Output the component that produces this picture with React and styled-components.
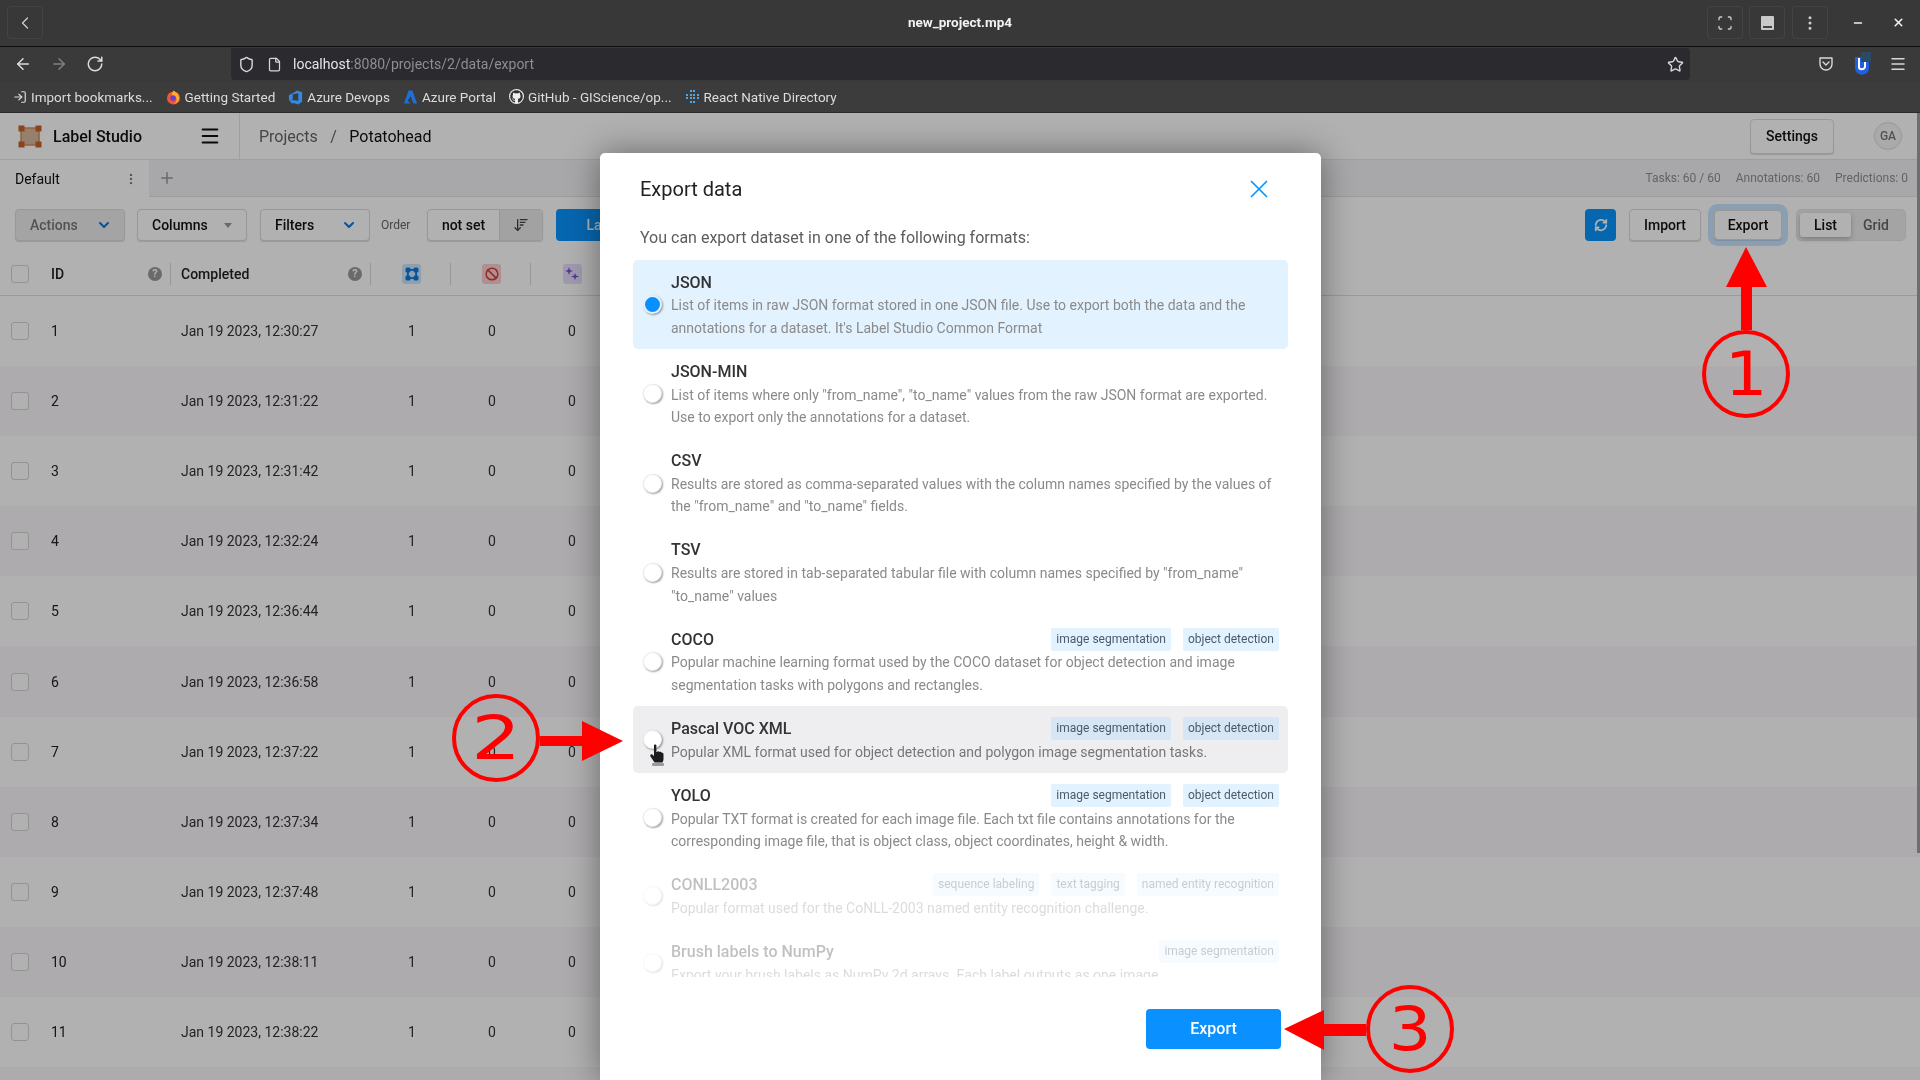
import React from "react";
import styled, { createGlobalStyle } from "styled-components";
import {
  ArrowLeft,
  ArrowRight,
  ArrowDownWideNarrow,
  Ban,
  ChevronDown,
  ChevronLeft,
  File,
  LogIn,
  Menu,
  Minus,
  MoreVertical,
  Plus,
  RefreshCw,
  RotateCw,
  Scan,
  Shield,
  Star,
  X,
} from "lucide-react";
import { FaGithub } from "react-icons/fa";

const GlobalStyle = createGlobalStyle`
  html, body { margin: 0; padding: 0; background: #3a3a3a; }
  * { box-sizing: border-box; }
  body { font-family: Roboto, "Liberation Sans", sans-serif; }
`;

const rows = [
  ["1", "12:30:27"],
  ["2", "12:31:22"],
  ["3", "12:31:42"],
  ["4", "12:32:24"],
  ["5", "12:36:44"],
  ["6", "12:36:58"],
  ["7", "12:37:22"],
  ["8", "12:37:34"],
  ["9", "12:37:48"],
  ["10", "12:38:11"],
  ["11", "12:38:22"],
  ["12", "12:38:40"],
];

const SEG = "image segmentation";
const DET = "object detection";

const formats = [
  {
    name: "JSON",
    selected: true,
    lines: [
      "List of items in raw JSON format stored in one JSON file. Use to export both the data and the",
      "annotations for a dataset. It's Label Studio Common Format",
    ],
  },
  {
    name: "JSON-MIN",
    lines: [
      'List of items where only "from_name", "to_name" values from the raw JSON format are exported.',
      "Use to export only the annotations for a dataset.",
    ],
  },
  {
    name: "CSV",
    lines: [
      "Results are stored as comma-separated values with the column names specified by the values of",
      'the "from_name" and "to_name" fields.',
    ],
  },
  {
    name: "TSV",
    lines: [
      'Results are stored in tab-separated tabular file with column names specified by "from_name"',
      '"to_name" values',
    ],
  },
  {
    name: "COCO",
    tags: [SEG, DET],
    lines: [
      "Popular machine learning format used by the COCO dataset for object detection and image",
      "segmentation tasks with polygons and rectangles.",
    ],
  },
  {
    name: "Pascal VOC XML",
    hover: true,
    tags: [SEG, DET],
    lines: ["Popular XML format used for object detection and polygon image segmentation tasks."],
  },
  {
    name: "YOLO",
    tags: [SEG, DET],
    lines: [
      "Popular TXT format is created for each image file. Each txt file contains annotations for the",
      "corresponding image file, that is object class, object coordinates, height & width.",
    ],
  },
  {
    name: "CONLL2003",
    disabled: true,
    tags: ["sequence labeling", "text tagging", "named entity recognition"],
    lines: ["Popular format used for the CoNLL-2003 named entity recognition challenge."],
  },
  {
    name: "Brush labels to NumPy",
    disabled: true,
    tags: [SEG],
    lines: ["Export your brush labels as NumPy 2d arrays. Each label outputs as one image."],
  },
];

const LogoMark = () => (
  <svg width="24" height="23" viewBox="0 0 24 23">
    <rect x="3" y="3" width="18" height="17" fill="#d9b79c" stroke="#cf8f5e" strokeWidth="1.5" />
    <rect x="0.5" y="0.5" width="6" height="6" fill="#c4632a" />
    <rect x="17.5" y="0.5" width="6" height="6" fill="#c4632a" />
    <rect x="0.5" y="16.5" width="6" height="6" fill="#c4632a" />
    <rect x="17.5" y="16.5" width="6" height="6" fill="#c4632a" />
  </svg>
);

const FirefoxIcon = () => (
  <svg width="15" height="16" viewBox="0 0 16 16">
    <circle cx="8" cy="9" r="7" fill="#f0562f" />
    <path d="M8 1c3 2 6 4 6 8 0 3-2 6-6 6 3-1 4-3 3-6-1-2-4-3-5-2 0-2 1-4 2-6z" fill="#ffb02e" />
    <circle cx="7.5" cy="9" r="3" fill="#6b3fc4" />
  </svg>
);

const DevopsIcon = () => (
  <svg width="15" height="16" viewBox="0 0 16 16">
    <path d="M15 3v10l-4 3-6-2v2L1 11l10 1V4L5 5v6L1 11V6l9-5z" fill="#2f8be6" />
  </svg>
);

const PortalIcon = () => (
  <svg width="15" height="16" viewBox="0 0 16 16">
    <path d="M6 1h4l5 14h-4L8 7l-3 5 3 3H1z" fill="#1f6fd6" />
  </svg>
);

const DirectoryIcon = () => (
  <svg width="15" height="15" viewBox="0 0 15 15" fill="#4aa8e8">
    <rect x="5" y="1" width="2" height="2" />
    <rect x="8" y="1" width="2" height="2" />
    <rect x="1" y="5" width="2" height="2" />
    <rect x="5" y="5" width="2" height="2" />
    <rect x="8" y="5" width="2" height="2" />
    <rect x="12" y="5" width="2" height="2" />
    <rect x="1" y="8" width="2" height="2" />
    <rect x="5" y="8" width="2" height="2" />
    <rect x="8" y="8" width="2" height="2" />
    <rect x="12" y="8" width="2" height="2" />
    <rect x="5" y="12" width="2" height="2" />
    <rect x="8" y="12" width="2" height="2" />
  </svg>
);

const MiniPlayerIcon = () => (
  <svg width="15" height="16" viewBox="0 0 15 16">
    <rect x="1" y="1" width="13" height="14" rx="1" fill="#c9c9c9" />
    <rect x="3" y="11" width="9" height="2" fill="#444" />
  </svg>
);

const PocketIcon = () => (
  <svg width="16" height="16" viewBox="0 0 16 16" fill="none" stroke="#d8d8d8" strokeWidth="1.4">
    <path d="M2 2h12v6a6 6 0 0 1-12 0z" strokeLinejoin="round" />
    <path d="M5 6l3 3 3-3" strokeLinecap="round" />
  </svg>
);

const ShieldBadge = () => (
  <svg width="18" height="24" viewBox="0 0 18 24">
    <path d="M2 5h14v11c0 4-3 6-7 7-4-1-7-3-7-7z" fill="#1f5fe0" />
    <path d="M6 6v9c0 3 5 3 6 0V6" fill="none" stroke="#fff" strokeWidth="2" />
    <rect x="8" y="0" width="10" height="10" fill="#2b4a63" />
  </svg>
);

const HandCursor = () => (
  <svg width="16" height="22" viewBox="0 0 16 22">
    <path
      d="M5 1.5c0-1.4 2.4-1.4 2.4 0V8l.6-.1c.6-1 2.2-.8 2.5.2.8-.5 2-.2 2.2.7.9-.2 1.8.4 1.8 1.4V15c0 1.700-.6 2.500-1 3.500H5.500L1.500 12.500c-1-1.600.8-3 2-1.800L5 12z"
      fill="#1c1c1c"
    />
    <rect x="3" y="19" width="12" height="3" rx="1" fill="#777" opacity="0.7" />
  </svg>
);

const RegionIcon = () => (
  <svg width="14" height="14" viewBox="0 0 14 14" fill="#0a7ae0">
    <rect x="0.500" y="0.500" width="5" height="5" rx="1.500" />
    <rect x="8.500" y="0.500" width="5" height="5" rx="1.500" />
    <rect x="0.500" y="8.500" width="5" height="5" rx="1.500" />
    <rect x="8.500" y="8.500" width="5" height="5" rx="1.500" />
    <rect x="4" y="2" width="6" height="1.800" />
    <rect x="4" y="10.200" width="6" height="1.800" />
    <rect x="2" y="4" width="1.800" height="6" />
    <rect x="10.200" y="4" width="1.800" height="6" />
  </svg>
);

const StarsIcon = () => (
  <svg width="14" height="16" viewBox="0 0 14 16" fill="#7a4fe0">
    <path d="M4 1l1 3 3 1-3 1-1 3-1-3-3-1 3-1z" />
    <path d="M10 7l1 2.500 3 1-3 1-1 2.500-1-2.500-3-1 3-1z" />
  </svg>
);

const Page = styled.div`
  width: 1920px;
  height: 1080px;
  display: flex;
  flex-direction: column;
  position: relative;
  overflow: hidden;
  background: #fff;
  filter: blur(0.35px);
`;

/* player title bar */
const TitleBar = styled.div`
  height: 47px;
  flex: none;
  padding: 6px 2px 7px 7px;
  display: grid;
  grid-template-columns: 1fr auto 1fr;
  align-items: center;
  background: #383838;
  border-bottom: 1px solid #0f0f0f;
  color: #fff;
`;

const FileName = styled.div`
  margin: 0 5px 2px 0;
  font-size: 13.5px;
  font-weight: 700;
  color: #f2f2f2;
`;

const WindowControls = styled.div`
  display: flex;
  align-items: center;
  justify-content: flex-end;
`;

const FrameButton = styled.div`
  width: 36px;
  height: 33px;
  margin-right: ${(p) => p.$gap || 0}px;
  display: flex;
  align-items: center;
  justify-content: center;
  border: 1px solid #444;
  border-radius: 4px;
  color: #cfcfcf;
`;

const WindowButton = styled.div`
  width: 40px;
  display: flex;
  justify-content: center;
  color: #f0f0f0;
`;

/* browser chrome */
const NavBar = styled.div`
  height: 35px;
  flex: none;
  display: flex;
  align-items: flex-start;
  background: #3a3a3a;
`;

const NavButtons = styled.div`
  width: 231px;
  height: 33px;
  padding-left: 14px;
  display: flex;
  align-items: center;
  gap: 18px;
`;

const AddressBar = styled.div`
  width: 1459px;
  height: 32px;
  margin-top: 1px;
  padding: 0 6px 0 7px;
  display: flex;
  align-items: center;
  background: #2b2a2e;
  border-radius: 0 4px 4px 4px;
  color: #d6d6d6;
  font-size: 14px;
`;

const Host = styled.span`
  color: #e6e6e6;
`;

const UrlRest = styled.span`
  color: #8e8e90;
`;

const Url = styled.div`
  flex: 1;
  margin-left: 11px;
`;

const PageGlyph = styled.span`
  margin-left: 12px;
  display: flex;
`;

const NavTools = styled.div`
  flex: 1;
  height: 33px;
  padding: 0 13px 0 128px;
  display: flex;
  align-items: center;
  justify-content: space-between;
  color: #d8d8d8;
`;

const BookmarkBar = styled.div`
  height: 31px;
  flex: none;
  padding: 0 0 1px 13px;
  display: flex;
  align-items: center;
  gap: 13px;
  background: #3c3c3c;
  border-bottom: 1px solid #2a2a2a;
`;

const Bookmark = styled.div`
  display: flex;
  align-items: center;
  gap: 4px;
  font-size: 13.5px;
  color: #dcdcdc;
  white-space: nowrap;
`;

const GithubBadge = styled.span`
  width: 15px;
  height: 15px;
  display: flex;
  align-items: center;
  justify-content: center;
  border-radius: 50%;
  background: #eee;
  color: #333;
`;

/* label studio */
const Workspace = styled.div`
  flex: 1;
  min-height: 0;
  display: flex;
  flex-direction: column;
  position: relative;
  overflow: hidden;
  color: #111;
  background: #fff;
`;

const AppHeader = styled.div`
  height: 47px;
  flex: none;
  display: flex;
  align-items: center;
  border-bottom: 1px solid #e6e6e6;
`;

const Brand = styled.div`
  width: 240px;
  height: 100%;
  padding: 0 18px 0 18px;
  display: flex;
  align-items: center;
  border-right: 1px solid #e6e6e6;
`;

const BrandName = styled.div`
  flex: 1;
  margin-left: 11px;
  font-size: 16px;
  font-weight: 500;
`;

const Crumbs = styled.div`
  flex: 1;
  padding-left: 19px;
  display: flex;
  gap: 12.5px;
  font-size: 16px;
  color: #111;
`;

const CrumbMuted = styled.span`
  color: #666;
`;

const HeaderActions = styled.div`
  display: flex;
  align-items: center;
  gap: 40px;
  padding-right: 18px;
`;

const Avatar = styled.div`
  width: 28px;
  height: 28px;
  display: flex;
  align-items: center;
  justify-content: center;
  border: 1px solid #ddd;
  border-radius: 50%;
  background: #f5f5f5;
  font-size: 12px;
  font-weight: 500;
  color: #777;
`;

const TabsRow = styled.div`
  height: 37px;
  flex: none;
  display: flex;
  align-items: center;
  background: #f2f2f5;
  border-bottom: 1px solid #e2e2e2;
`;

const ActiveTab = styled.div`
  width: 149px;
  height: 37px;
  padding: 1px 11px 0 15px;
  display: flex;
  align-items: center;
  justify-content: space-between;
  background: #fff;
  font-size: 14px;
`;

const AddTab = styled.div`
  margin-left: 9px;
  display: flex;
  color: #999;
`;

const Stats = styled.div`
  margin-left: auto;
  padding-right: 12px;
  display: flex;
  gap: 15px;
  font-size: 12px;
  color: #8f8f8f;
`;

const Toolbar = styled.div`
  height: 57px;
  flex: none;
  padding: 12px 14px 0 15px;
  display: flex;
  align-items: flex-start;
`;

const Btn = styled.div`
  width: ${(p) => p.$w}px;
  height: ${(p) => p.$h || 32}px;
  margin-right: ${(p) => p.$mr || 0}px;
  padding: 0 ${(p) => (p.$between ? 12 : 0)}px 0 ${(p) => (p.$between ? 14 : 0)}px;
  display: flex;
  align-items: center;
  justify-content: ${(p) => (p.$between ? "space-between" : "center")};
  flex: none;
  border: 1px solid #dcdcdc;
  border-radius: 4px;
  background: ${(p) => (p.$disabled ? "#ececec" : "#fff")};
  color: ${(p) => (p.$disabled ? "#777" : "#111")};
  font-size: 14px;
  font-weight: 500;
  box-shadow: 0 1px 1px rgba(0, 0, 0, 0.14);
`;

const Caret = styled.span`
  width: 0;
  height: 0;
  margin-right: 2px;
  border-left: 4px solid transparent;
  border-right: 4px solid transparent;
  border-top: 5px solid #999;
`;

const OrderLabel = styled.div`
  width: 57px;
  height: 32px;
  padding-left: 11px;
  display: flex;
  align-items: center;
  flex: none;
  font-size: 12px;
  color: #666;
`;

const OrderBox = styled.div`
  width: 116px;
  height: 32px;
  margin-right: 13px;
  display: flex;
  flex: none;
  border: 1px solid #dcdcdc;
  border-radius: 4px;
  overflow: hidden;
  background: #fff;
  box-shadow: 0 1px 1px rgba(0, 0, 0, 0.14);
`;

const OrderValue = styled.div`
  flex: 1;
  display: flex;
  align-items: center;
  justify-content: center;
  font-size: 14px;
  font-weight: 500;
`;

const OrderToggle = styled.div`
  width: 43px;
  display: flex;
  align-items: center;
  justify-content: center;
  background: #eaeaea;
  border-left: 1px solid #dcdcdc;
  color: #444;
`;

const PrimaryBtn = styled.div`
  width: ${(p) => p.$w}px;
  height: 32px;
  margin-right: ${(p) => p.$mr || 0}px;
  display: flex;
  align-items: center;
  justify-content: center;
  flex: none;
  border-radius: 4px;
  background: #0a95ff;
  color: #fff;
  font-size: 14px;
  font-weight: 500;
`;

const ToolbarRight = styled.div`
  margin-left: auto;
  display: flex;
  align-items: flex-start;
`;

const FocusBtn = styled(Btn)`
  margin-top: 1px;
  box-shadow: 0 0 0 6px rgba(80, 165, 255, 0.3), 0 1px 1px rgba(0, 0, 0, 0.14);
`;

const ViewSwitch = styled.div`
  width: 110px;
  height: 32px;
  padding: 4px 4px 4px 3px;
  display: flex;
  align-items: center;
  border-radius: 5px;
  background: #ececec;
  border: 1px solid #e4e4e4;
  font-size: 14px;
  font-weight: 500;
`;

const ViewActive = styled.div`
  width: 51px;
  height: 24px;
  display: flex;
  align-items: center;
  justify-content: center;
  border-radius: 3px;
  background: #fff;
  box-shadow: 0 2px 5px rgba(0, 0, 0, 0.25);
`;

const ViewIdle = styled.div`
  flex: 1;
  text-align: center;
  color: #666;
`;

const TableRow = styled.div`
  height: ${(p) => p.$h}px;
  flex: none;
  padding-bottom: ${(p) => (p.$header ? 2 : 0)}px;
  display: grid;
  grid-template-columns: 40px 131px 200px 80px 80px 80px 1fr;
  align-items: center;
  font-size: 14px;
  background: ${(p) => (p.$shaded ? "#f9f7f9" : "#fff")};
  border-bottom: ${(p) => (p.$header ? "1px solid #dedede" : "none")};
`;

const CheckCell = styled.div`
  padding-left: 11px;
  display: flex;
`;

const Checkbox = styled.div`
  width: 18px;
  height: 18px;
  border: 1px solid #d4d4d4;
  border-radius: 3px;
  background: #fff;
`;

const HeadCell = styled.div`
  height: 22px;
  padding: 0 ${(p) => (p.$center ? 0 : 8)}px 0 ${(p) => p.$pad || 0}px;
  display: flex;
  align-items: center;
  justify-content: ${(p) => (p.$center ? "center" : "space-between")};
  border-right: ${(p) => (p.$noLine ? "none" : "1px solid #dadada")};
  font-weight: 500;
  color: #222;
`;

const Hint = styled.span`
  width: 14px;
  height: 14px;
  display: flex;
  align-items: center;
  justify-content: center;
  border-radius: 50%;
  background: #999;
  color: #fff;
  font-size: 11px;
  font-weight: 700;
`;

const IconTile = styled.span`
  width: 19px;
  height: 20px;
  margin-left: 2px;
  display: flex;
  align-items: center;
  justify-content: center;
  border-radius: 3px;
  background: ${(p) => p.$bg};
  color: ${(p) => p.$fg};
`;

const DateCell = styled.div`
  padding-left: 10px;
  color: #333;
`;

const IdCell = styled.div`
  padding-left: 11px;
  color: #222;
`;

const NumberCell = styled.div`
  padding-left: 2px;
  text-align: center;
  color: #333;
`;

const PageScrollbar = styled.div`
  position: absolute;
  top: 0;
  right: 0;
  width: 3px;
  height: 740px;
  background: #6e6e6e;
`;

/* modal */
const Overlay = styled.div`
  position: absolute;
  inset: 0;
  background: rgba(0, 0, 0, 0.306);
`;

const Modal = styled.div`
  position: absolute;
  left: 600px;
  top: 40px;
  bottom: 0;
  width: 721px;
  padding: 20px 33px 0;
  display: flex;
  flex-direction: column;
  border-radius: 5px 5px 0 0;
  background: #fff;
  box-shadow: 0 0 34px rgba(0, 0, 0, 0.42);
`;

const ModalHead = styled.div`
  height: 32px;
  flex: none;
  padding: 0 14px 0 7px;
  display: flex;
  align-items: center;
  justify-content: space-between;
  color: #0a95ff;
`;

const ModalTitle = styled.div`
  font-size: 20px;
  color: #222;
`;

const ModalLead = styled.div`
  height: 24px;
  flex: none;
  margin-top: 21px;
  padding-left: 7px;
  font-size: 16px;
  line-height: 24px;
  color: #5c5c5c;
`;

const FormatList = styled.div`
  height: 717px;
  flex: none;
  margin-top: 10px;
  overflow: hidden;
`;

const FormatItem = styled.div`
  padding: 10px 9px 10px 0;
  display: grid;
  grid-template-columns: 38px 1fr;
  align-items: center;
  border-radius: 5px;
  background: ${(p) => (p.$selected ? "#e3f2ff" : p.$hover ? "#eeeef1" : "transparent")};
  opacity: ${(p) => (p.$disabled ? 0.3 : 1)};
`;

const Radio = styled.div`
  width: 19px;
  height: 19px;
  justify-self: center;
  border-radius: 50%;
  background: ${(p) => (p.$on ? "#0a8fff" : "#fff")};
  border: ${(p) => (p.$on ? "2px solid #e8f2fb" : "1px solid #ececec")};
  box-shadow: 1px 1px 2px rgba(0, 0, 0, 0.4);
`;

const FormatHead = styled.div`
  height: 24px;
  display: flex;
  align-items: center;
  justify-content: space-between;
`;

const FormatName = styled.div`
  font-size: 16px;
  font-weight: 500;
  color: #333;
`;

const Tags = styled.div`
  display: flex;
  gap: 12px;
`;

const Tag = styled.span`
  height: 23px;
  padding: 0 5px;
  display: flex;
  align-items: center;
  border-radius: 2px;
  background: ${(p) => (p.$hover ? "#d6e6f4" : "#e3f2ff")};
  font-size: 12px;
  color: #4c5a68;
`;

const FormatText = styled.div`
  margin-top: 0.45px;
  font-size: 14px;
  line-height: 22.4px;
  white-space: nowrap;
  color: ${(p) => (p.$hover ? "#777" : "#8a8a8a")};
`;

const ModalFoot = styled.div`
  margin-top: 32px;
  padding-right: 7px;
  display: flex;
  justify-content: flex-end;
`;

const SubmitBtn = styled.div`
  width: 135px;
  height: 40px;
  padding-bottom: 2px;
  display: flex;
  align-items: center;
  justify-content: center;
  border-radius: 4px;
  background: #0a90ff;
  color: #fff;
  font-size: 16px;
  font-weight: 500;
`;

/* red annotations drawn over the recording */
const Callouts = styled.svg`
  position: absolute;
  inset: 0;
  pointer-events: none;
`;

const StepRing = styled.div`
  position: absolute;
  left: ${(p) => p.$x - 44}px;
  top: ${(p) => p.$y - 44}px;
  width: 88px;
  height: 88px;
  display: flex;
  align-items: center;
  justify-content: center;
  border: 4px solid #f00;
  border-radius: 50%;
  color: #f00;
  font-family: "DejaVu Sans", sans-serif;
  font-size: 60px;
  line-height: 1;
`;

const StepDigit = styled.span`
  display: block;
  transform: scaleX(${(p) => p.$stretch || 1.12});
`;

const PointerSpot = styled.div`
  position: absolute;
  left: 649px;
  top: 744px;
  display: flex;
`;

const App = () => (
  <Page>
    <GlobalStyle />
    <TitleBar>
      <FrameButton>
        <ChevronLeft size={20} strokeWidth={1.5} />
      </FrameButton>
      <FileName>new_project.mp4</FileName>
      <WindowControls>
        <FrameButton $gap={6}>
          <Scan size={16} />
        </FrameButton>
        <FrameButton $gap={7}>
          <MiniPlayerIcon />
        </FrameButton>
        <FrameButton $gap={10}>
          <MoreVertical size={18} />
        </FrameButton>
        <WindowButton>
          <Minus size={12} strokeWidth={3} />
        </WindowButton>
        <WindowButton>
          <X size={13} strokeWidth={3} />
        </WindowButton>
      </WindowControls>
    </TitleBar>

    <NavBar>
      <NavButtons>
        <ArrowLeft size={18} color="#dcdcdc" />
        <ArrowRight size={18} color="#808080" />
        <RotateCw size={18} color="#dcdcdc" />
      </NavButtons>
      <AddressBar>
        <Shield size={17} />
        <PageGlyph>
          <File size={15} />
        </PageGlyph>
        <Url>
          <Host>localhost</Host>
          <UrlRest>:8080/projects/2/data/export</UrlRest>
        </Url>
        <Star size={17} />
      </AddressBar>
      <NavTools>
        <PocketIcon />
        <ShieldBadge />
        <Menu size={18} />
      </NavTools>
    </NavBar>

    <BookmarkBar>
      <Bookmark>
        <LogIn size={14} />
        Import bookmarks...
      </Bookmark>
      <Bookmark>
        <FirefoxIcon />
        Getting Started
      </Bookmark>
      <Bookmark>
        <DevopsIcon />
        Azure Devops
      </Bookmark>
      <Bookmark>
        <PortalIcon />
        Azure Portal
      </Bookmark>
      <Bookmark>
        <GithubBadge>
          <FaGithub size={13} />
        </GithubBadge>
        GitHub - GIScience/op...
      </Bookmark>
      <Bookmark>
        <DirectoryIcon />
        React Native Directory
      </Bookmark>
    </BookmarkBar>

    <Workspace>
      <AppHeader>
        <Brand>
          <LogoMark />
          <BrandName>Label Studio</BrandName>
          <Menu size={22} strokeWidth={2.2} />
        </Brand>
        <Crumbs>
          <CrumbMuted>Projects</CrumbMuted>
          <CrumbMuted>/</CrumbMuted>
          <span>Potatohead</span>
        </Crumbs>
        <HeaderActions>
          <Btn $w={84} $h={35}>
            Settings
          </Btn>
          <Avatar>GA</Avatar>
        </HeaderActions>
      </AppHeader>

      <TabsRow>
        <ActiveTab>
          Default
          <MoreVertical size={14} color="#777" />
        </ActiveTab>
        <AddTab>
          <Plus size={18} />
        </AddTab>
        <Stats>
          <span>Tasks: 60 / 60</span>
          <span>Annotations: 60</span>
          <span>Predictions: 0</span>
        </Stats>
      </TabsRow>

      <Toolbar>
        <Btn $w={110} $mr={12} $between $disabled>
          Actions
          <ChevronDown size={16} strokeWidth={3} color="#0a7ae0" />
        </Btn>
        <Btn $w={110} $mr={13} $between>
          Columns
          <Caret />
        </Btn>
        <Btn $w={110} $between>
          Filters
          <ChevronDown size={16} strokeWidth={3} color="#0a7ae0" />
        </Btn>
        <OrderLabel>Order</OrderLabel>
        <OrderBox>
          <OrderValue>not set</OrderValue>
          <OrderToggle>
            <ArrowDownWideNarrow size={16} />
          </OrderToggle>
        </OrderBox>
        <PrimaryBtn $w={155}>Label All Tasks</PrimaryBtn>
        <ToolbarRight>
          <PrimaryBtn $w={31} $mr={13}>
            <RefreshCw size={14} strokeWidth={3} />
          </PrimaryBtn>
          <Btn $w={72} $mr={13}>
            Import
          </Btn>
          <FocusBtn $w={68} $h={30} $mr={14}>
            Export
          </FocusBtn>
          <ViewSwitch>
            <ViewActive>List</ViewActive>
            <ViewIdle>Grid</ViewIdle>
          </ViewSwitch>
        </ToolbarRight>
      </Toolbar>

      <TableRow $h={42} $header>
        <CheckCell>
          <Checkbox />
        </CheckCell>
        <HeadCell $pad={11}>
          ID
          <Hint>?</Hint>
        </HeadCell>
        <HeadCell $pad={10}>
          Completed
          <Hint>?</Hint>
        </HeadCell>
        <HeadCell $center>
          <IconTile $bg="#cfe6fb" $fg="#0a7ae0">
            <RegionIcon />
          </IconTile>
        </HeadCell>
        <HeadCell $center>
          <IconTile $bg="#fbd0d0" $fg="#d83a3a">
            <Ban size={14} strokeWidth={2.5} />
          </IconTile>
        </HeadCell>
        <HeadCell $center $noLine>
          <IconTile $bg="#e6defa" $fg="#7a4fe0">
            <StarsIcon />
          </IconTile>
        </HeadCell>
      </TableRow>

      {rows.map(([id, time], i) => (
        <TableRow key={id} $h={70.1} $shaded={i % 2 === 1}>
          <CheckCell>
            <Checkbox />
          </CheckCell>
          <IdCell>{id}</IdCell>
          <DateCell>Jan 19 2023, {time}</DateCell>
          <NumberCell>1</NumberCell>
          <NumberCell>0</NumberCell>
          <NumberCell>0</NumberCell>
        </TableRow>
      ))}

      <Overlay />
      <PageScrollbar />

      <Modal>
        <ModalHead>
          <ModalTitle>Export data</ModalTitle>
          <X size={30} strokeWidth={1.4} />
        </ModalHead>
        <ModalLead>You can export dataset in one of the following formats:</ModalLead>
        <FormatList>
          {formats.map((f) => (
            <FormatItem key={f.name} $selected={f.selected} $hover={f.hover} $disabled={f.disabled}>
              <Radio $on={f.selected} />
              <div>
                <FormatHead>
                  <FormatName>{f.name}</FormatName>
                  {f.tags && (
                    <Tags>
                      {f.tags.map((t) => (
                        <Tag key={t} $hover={f.hover}>
                          {t}
                        </Tag>
                      ))}
                    </Tags>
                  )}
                </FormatHead>
                <FormatText $hover={f.hover}>
                  {f.lines.map((line) => (
                    <div key={line}>{line}</div>
                  ))}
                </FormatText>
              </div>
            </FormatItem>
          ))}
        </FormatList>
        <ModalFoot>
          <SubmitBtn>Export</SubmitBtn>
        </ModalFoot>
      </Modal>
    </Workspace>

    <PointerSpot>
      <HandCursor />
    </PointerSpot>

    <Callouts width="1920" height="1080" viewBox="0 0 1920 1080" fill="#f00">
      <polygon points="1746,247 1767,287 1752,287 1752,330 1741,330 1741,287 1726,287" />
      <polygon points="540,736 582,736 582,721 623,741 582,761 582,746 540,746" />
      <polygon points="1284,1029 1324,1010 1324,1024 1366,1024 1366,1036 1324,1036 1324,1050" />
    </Callouts>
    <StepRing $x={1746} $y={374}>
      <StepDigit>1</StepDigit>
    </StepRing>
    <StepRing $x={496} $y={738}>
      <StepDigit $stretch={1.3}>2</StepDigit>
    </StepRing>
    <StepRing $x={1410} $y={1029}>
      <StepDigit>3</StepDigit>
    </StepRing>
  </Page>
);

export default App;
